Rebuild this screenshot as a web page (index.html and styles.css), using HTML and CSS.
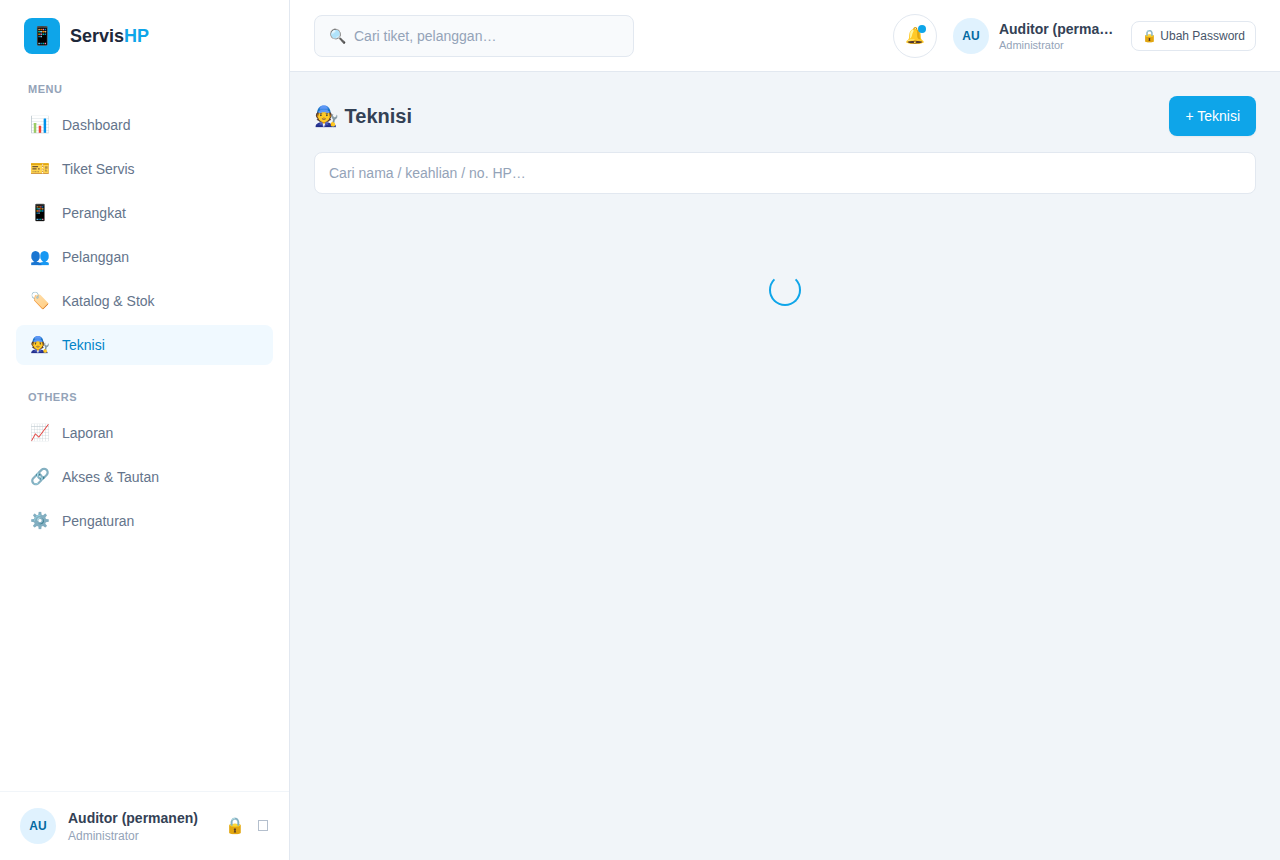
FILE: index.html
```html
<!DOCTYPE html>
<html lang="id">
<head>
	<meta charset="UTF-8">
	<meta name="viewport" content="width=device-width, initial-scale=1">
	<title>Teknisi - ServisHP</title>
	<link rel="stylesheet" href="styles.css">
</head>
<body>
	<div class="app">
		<aside class="sidebar">
			<a class="brand" href="#">
				<span class="brand-icon">📱</span>
				<span class="brand-name">Servis<span class="brand-hp">HP</span></span>
			</a>
			<nav class="nav">
				<h2 class="nav-title">MENU</h2>
				<ul class="nav-list">
					<li><a class="nav-link" href="#"><span class="nav-icon">📊</span>Dashboard</a></li>
					<li><a class="nav-link" href="#"><span class="nav-icon">🎫</span>Tiket Servis</a></li>
					<li><a class="nav-link" href="#"><span class="nav-icon">📱</span>Perangkat</a></li>
					<li><a class="nav-link" href="#"><span class="nav-icon">👥</span>Pelanggan</a></li>
					<li><a class="nav-link" href="#"><span class="nav-icon">🏷️</span>Katalog &amp; Stok</a></li>
					<li><a class="nav-link active" href="#" aria-current="page"><span class="nav-icon">🧑‍🔧</span>Teknisi</a></li>
				</ul>
				<h2 class="nav-title">OTHERS</h2>
				<ul class="nav-list">
					<li><a class="nav-link" href="#"><span class="nav-icon">📈</span>Laporan</a></li>
					<li><a class="nav-link" href="#"><span class="nav-icon">🔗</span>Akses &amp; Tautan</a></li>
					<li><a class="nav-link" href="#"><span class="nav-icon">⚙️</span>Pengaturan</a></li>
				</ul>
			</nav>
			<div class="side-user">
				<span class="avatar">AU</span>
				<div class="side-info">
					<p class="user-name">Auditor (permanen)</p>
					<p class="side-role">Administrator</p>
				</div>
				<div class="side-actions">
					<button class="icon-btn" type="button" aria-label="Ubah Password">🔒</button>
					<button class="icon-btn" type="button" aria-label="Keluar">
						<svg width="12" height="12" viewBox="0 0 12 12" fill="none" stroke="currentColor"><rect x="1.5" y="0.5" width="9" height="10"/></svg>
					</button>
				</div>
			</div>
		</aside>

		<div class="main">
			<header class="topbar">
				<label class="search">
					<span class="search-icon">🔍</span>
					<input class="search-input" type="search" placeholder="Cari tiket, pelanggan…" aria-label="Cari tiket, pelanggan">
				</label>
				<div class="top-right">
					<button class="bell" type="button" aria-label="Notifikasi">🔔<span class="bell-dot"></span></button>
					<div class="top-user">
						<span class="avatar">AU</span>
						<div class="top-info">
							<p class="user-name">Auditor (perma…</p>
							<p class="top-role">Administrator</p>
						</div>
					</div>
					<button class="pass-btn" type="button">🔒 Ubah Password</button>
				</div>
			</header>

			<main class="content">
				<div class="page-head">
					<h1 class="page-title">🧑‍🔧 Teknisi</h1>
					<button class="add-btn" type="button">+ Teknisi</button>
				</div>
				<input class="filter" type="text" placeholder="Cari nama / keahlian / no. HP…" aria-label="Cari teknisi">
				<div class="loading">
					<div class="spinner" role="status" aria-label="Memuat"></div>
				</div>
			</main>
		</div>
	</div>
</body>
</html>
```
FILE: styles.css
```css
*{
	margin: 0;
	padding: 0;
	box-sizing: border-box;
}
body{
	font-family: "Liberation Sans", Arial, sans-serif;
	font-size: 14px;
	line-height: 20px;
	color: #334155;
	background: #f1f5f9;
}
button,input{
	font: inherit;
	color: inherit;
}
button{
	cursor: pointer;
}
a{
	color: inherit;
	text-decoration: none;
}
ul{
	list-style: none;
}
.app{
	display: flex;
	min-height: 100vh;
}

/* sidebar */
.sidebar{
	display: flex;
	flex-direction: column;
	flex: none;
	width: 290px;
	height: 100vh;
	position: sticky;
	top: 0;
	background: #fff;
	border-right: 1px solid #e2e8f0;
}
.brand{
	display: flex;
	align-items: center;
	gap: 10px;
	height: 72px;
	padding: 0 24px;
}
.brand-icon{
	display: flex;
	align-items: center;
	justify-content: center;
	width: 36px;
	height: 36px;
	border-radius: 8px;
	background: #0ea5e9;
	font-size: 18px;
}
.brand-name{
	font-size: 18px;
	font-weight: bold;
	color: #1e293b;
}
.brand-hp{
	color: #0ea5e9;
}
.nav{
	flex: 1;
	padding: 9px 16px;
	overflow-y: auto;
}
.nav-title{
	margin-bottom: 8px;
	padding: 0 12px;
	font-size: 11px;
	line-height: 16px;
	letter-spacing: 0.05em;
	color: #94a3b8;
}
.nav-list{
	display: flex;
	flex-direction: column;
	gap: 4px;
	margin-bottom: 24px;
}
.nav-link{
	display: flex;
	align-items: center;
	gap: 12px;
	height: 40px;
	padding: 0 14px;
	border-radius: 8px;
	color: #64748b;
}
.nav-link.active{
	background: #f0f9ff;
	color: #0284c7;
}
.nav-icon{
	display: flex;
	justify-content: center;
	width: 20px;
	font-size: 16px;
}
.side-user{
	display: flex;
	align-items: center;
	gap: 12px;
	padding: 16px 20px;
	border-top: 1px solid #f1f5f9;
}
.avatar{
	display: flex;
	align-items: center;
	justify-content: center;
	flex: none;
	width: 36px;
	height: 36px;
	border-radius: 50%;
	background: #e0f2fe;
	color: #0369a1;
	font-size: 12px;
	font-weight: bold;
}
.side-info{
	flex: 1;
	min-width: 0;
}
.user-name{
	overflow: hidden;
	font-weight: bold;
	white-space: nowrap;
	text-overflow: ellipsis;
}
.side-role{
	font-size: 12px;
	line-height: 16px;
	color: #94a3b8;
}
.side-actions{
	display: flex;
	align-items: center;
	gap: 12px;
}
.icon-btn{
	display: flex;
	align-items: center;
	border: 0;
	background: none;
	color: #b4bfcd;
	font-size: 16px;
}

/* topbar */
.main{
	flex: 1;
	min-width: 0;
}
.topbar{
	display: flex;
	align-items: center;
	justify-content: space-between;
	gap: 24px;
	height: 72px;
	padding: 0 24px;
	background: #fff;
	border-bottom: 1px solid #e2e8f0;
}
.search{
	display: flex;
	align-items: center;
	gap: 8px;
	flex: 0 1 320px;
	height: 42px;
	padding: 0 14px;
	border: 1px solid #e2e8f0;
	border-radius: 8px;
	background: #f8fafc;
}
.search-input{
	flex: 1;
	min-width: 0;
	border: 0;
	outline: 0;
	background: none;
}
::placeholder{
	color: #94a3b8;
	opacity: 1;
}
.top-right{
	display: flex;
	align-items: center;
	gap: 16px;
}
.bell{
	position: relative;
	width: 44px;
	height: 44px;
	border: 1px solid #e2e8f0;
	border-radius: 50%;
	background: #fff;
	font-size: 16px;
}
.bell-dot{
	position: absolute;
	top: 10px;
	right: 10px;
	width: 8px;
	height: 8px;
	border-radius: 50%;
	background: #0ea5e9;
}
.top-user{
	display: flex;
	align-items: center;
	gap: 10px;
}
.top-info{
	width: 116px;
	line-height: 18px;
}
.top-role{
	font-size: 11px;
	line-height: 14px;
	color: #94a3b8;
}
.pass-btn{
	height: 30px;
	padding: 0 10px;
	border: 1px solid #e2e8f0;
	border-radius: 8px;
	background: #fff;
	color: #475569;
	font-size: 12px;
}

/* content */
.content{
	padding: 24px;
}
.page-head{
	display: flex;
	align-items: center;
	justify-content: space-between;
	margin-bottom: 16px;
}
.page-title{
	font-size: 20px;
	line-height: 28px;
}
.add-btn{
	height: 40px;
	padding: 0 16px;
	border: 0;
	border-radius: 8px;
	background: #0ea5e9;
	box-shadow: 0 1px 2px rgba(0,0,0,0.05);
	color: #fff;
}
.filter{
	display: block;
	width: 100%;
	height: 42px;
	padding: 0 14px;
	border: 1px solid #e2e8f0;
	border-radius: 8px;
	background: #fff;
}
.loading{
	display: flex;
	justify-content: center;
	padding: 80px 0;
}
.spinner{
	width: 32px;
	height: 32px;
	border: 2px solid #0ea5e9;
	border-top-color: transparent;
	border-radius: 50%;
}
```
